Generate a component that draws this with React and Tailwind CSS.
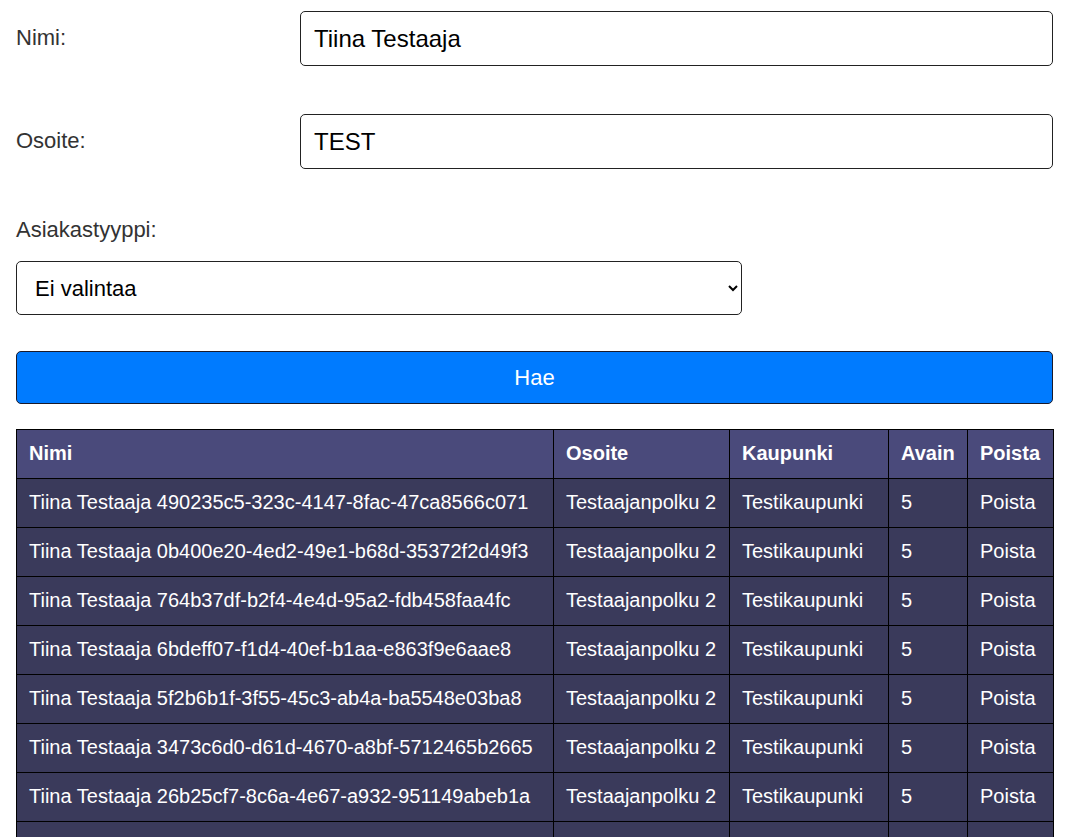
import { useState } from 'react'

const rows = [
  'Tiina Testaaja 490235c5-323c-4147-8fac-47ca8566c071',
  'Tiina Testaaja 0b400e20-4ed2-49e1-b68d-35372f2d49f3',
  'Tiina Testaaja 764b37df-b2f4-4e4d-95a2-fdb458faa4fc',
  'Tiina Testaaja 6bdeff07-f1d4-40ef-b1aa-e863f9e6aae8',
  'Tiina Testaaja 5f2b6b1f-3f55-45c3-ab4a-ba5548e03ba8',
  'Tiina Testaaja 3473c6d0-d61d-4670-a8bf-5712465b2665',
  'Tiina Testaaja 26b25cf7-8c6a-4e67-a932-951149abeb1a',
  'Tiina Testaaja 4fb49c3d-1a4b-4c2e-9d1a-e7a1b1c83d40',
]

const App = () => {
  const [nimi, setNimi] = useState('Tiina Testaaja')
  const [osoite, setOsoite] = useState('TEST')
  const [tyyppi, setTyyppi] = useState('')

  return (
    <div className="pl-4 pr-[15px] pt-[11px] pb-8 bg-white font-['Liberation_Sans',Arial,sans-serif]">
      <div className="flex items-center">
        <label className="w-[284px] text-[22px] text-[#333] -mt-0.5">Nimi:</label>
        <input
          value={nimi}
          onChange={(e) => setNimi(e.target.value)}
          className="flex-1 h-[55px] px-[13px] text-[24px] text-black border border-[#222] rounded-[5px] outline-none"
        />
      </div>

      <div className="flex items-center mt-12">
        <label className="w-[284px] text-[22px] text-[#333] -mt-0.5">Osoite:</label>
        <input
          value={osoite}
          onChange={(e) => setOsoite(e.target.value)}
          className="flex-1 h-[55px] px-[13px] text-[24px] text-black border border-[#222] rounded-[5px] outline-none"
        />
      </div>

      <div className="mt-[48px] text-[22px] leading-[26px] text-[#333]">Asiakastyyppi:</div>

      <select
        value={tyyppi}
        onChange={(e) => setTyyppi(e.target.value)}
        className="mt-[18px] block w-[726px] h-[54px] pl-[14px] pr-2 text-[22px] text-black bg-white border border-[#222] rounded-[5px] outline-none"
      >
        <option value="">Ei valintaa</option>
        <option value="1">Yritysasiakas</option>
        <option value="2">Kuluttaja</option>
      </select>

      <button className="mt-9 block w-full h-[53px] text-[22px] text-white bg-[#007bff] border border-[#1a1a2a] rounded-[5px]">
        Hae
      </button>

      <table className="mt-[25px] w-full table-fixed border-collapse text-[20px] leading-[24px] text-white">
        <colgroup>
          <col className="w-[537px]" />
          <col className="w-[176px]" />
          <col className="w-[159px]" />
          <col className="w-[79px]" />
          <col className="w-[86px]" />
        </colgroup>
        <thead>
          <tr className="bg-[#4a4a7b]">
            {['Nimi', 'Osoite', 'Kaupunki', 'Avain', 'Poista'].map((h) => (
              <th key={h} className="border border-black px-3 pt-[11px] pb-[13px] text-left font-bold whitespace-nowrap">
                {h}
              </th>
            ))}
          </tr>
        </thead>
        <tbody>
          {rows.map((r) => (
            <tr key={r} className="bg-[#3a3a5b]">
              <td className="border border-black px-3 pt-[11px] pb-[13px] whitespace-nowrap">{r}</td>
              <td className="border border-black px-3 pt-[11px] pb-[13px] whitespace-nowrap">Testaajanpolku 2</td>
              <td className="border border-black px-3 pt-[11px] pb-[13px] whitespace-nowrap">Testikaupunki</td>
              <td className="border border-black px-3 pt-[11px] pb-[13px] whitespace-nowrap">5</td>
              <td className="border border-black px-3 pt-[11px] pb-[13px] whitespace-nowrap">Poista</td>
            </tr>
          ))}
        </tbody>
      </table>
    </div>
  )
}

export default App
